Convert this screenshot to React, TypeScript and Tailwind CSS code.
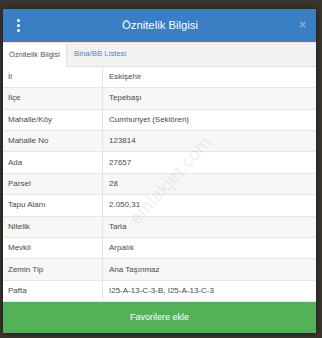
import React from "react";

const rows: [string, string][] = [
  ["İl", "Eskişehir"],
  ["İlçe", "Tepebaşı"],
  ["Mahalle/Köy", "Cumhuriyet (Sekiören)"],
  ["Mahalle No", "123814"],
  ["Ada", "27657"],
  ["Parsel", "28"],
  ["Tapu Alanı", "2.050,31"],
  ["Nitelik", "Tarla"],
  ["Mevkii", "Arpalık"],
  ["Zemin Tip", "Ana Taşınmaz"],
  ["Pafta", "I25-A-13-C-3-B, I25-A-13-C-3"],
];

export default function App() {
  return (
    <div
      className="w-[322px] h-[338px] overflow-hidden bg-[#3b352f] pt-[9px] pl-[3px]"
      style={{ fontFamily: '"Liberation Sans", Arial, sans-serif' }}
    >
      <div className="relative w-[313px] h-[324px] flex flex-col bg-white shadow-[0_0_6px_rgba(0,0,0,0.6)]">
        {/* header */}
        <div className="h-[33px] bg-[#3a7ec4] flex items-center px-3 text-white">
          <div className="flex flex-col gap-[2px] w-[4px] ml-[2px]">
            <span className="w-[3px] h-[3px] bg-white rounded-full" />
            <span className="w-[3px] h-[3px] bg-white rounded-full" />
            <span className="w-[3px] h-[3px] bg-white rounded-full" />
          </div>
          <div className="flex-1 text-center text-[11.3px] leading-none">Öznitelik Bilgisi</div>
          <div className="text-[12px] leading-none text-[#8eaccb] font-bold mr-[-2px]">×</div>
        </div>

        {/* tabs */}
        <div className="h-[25px] bg-[#f2f2f2] flex items-end border-t border-[#f6dede] border-b border-b-[#e2e2e2]">
          <div className="h-[24px] bg-white w-[64px] flex items-center justify-center text-[7.6px] text-[#555] border-r border-[#e2e2e2] -mb-px">
            Öznitelik Bilgisi
          </div>
          <div className="h-[24px] flex items-center pl-[7px] text-[7.8px] text-[#5b85b5]">Bina/BB Listesi</div>
        </div>

        {/* table */}
        <div className="flex-1 flex flex-col">
          {rows.map(([k, v], i) => (
            <div
              key={k}
              className={`flex h-[21.4px] border-b border-[#e6e6e6] text-[8px] text-[#4a4a4a] ${
                i % 2 === 1 ? "bg-[#f7f7f7]" : "bg-white"
              }`}
            >
              <div className="w-[100px] border-r border-[#e3e3e3] flex items-center pl-[5px]">{k}</div>
              <div className="flex-1 flex items-center pl-[6px]">{v}</div>
            </div>
          ))}
        </div>

        {/* watermark */}
        <div className="absolute left-[112px] top-[158px] -rotate-[48deg] text-[18px] text-[#000] opacity-[0.06] pointer-events-none tracking-wide">
          emlakjet.com
        </div>

        {/* button */}
        <div className="h-[31px] bg-[#54b158] flex items-center justify-center text-white text-[9px]">
          Favorilere ekle
        </div>
      </div>
    </div>
  );
}
